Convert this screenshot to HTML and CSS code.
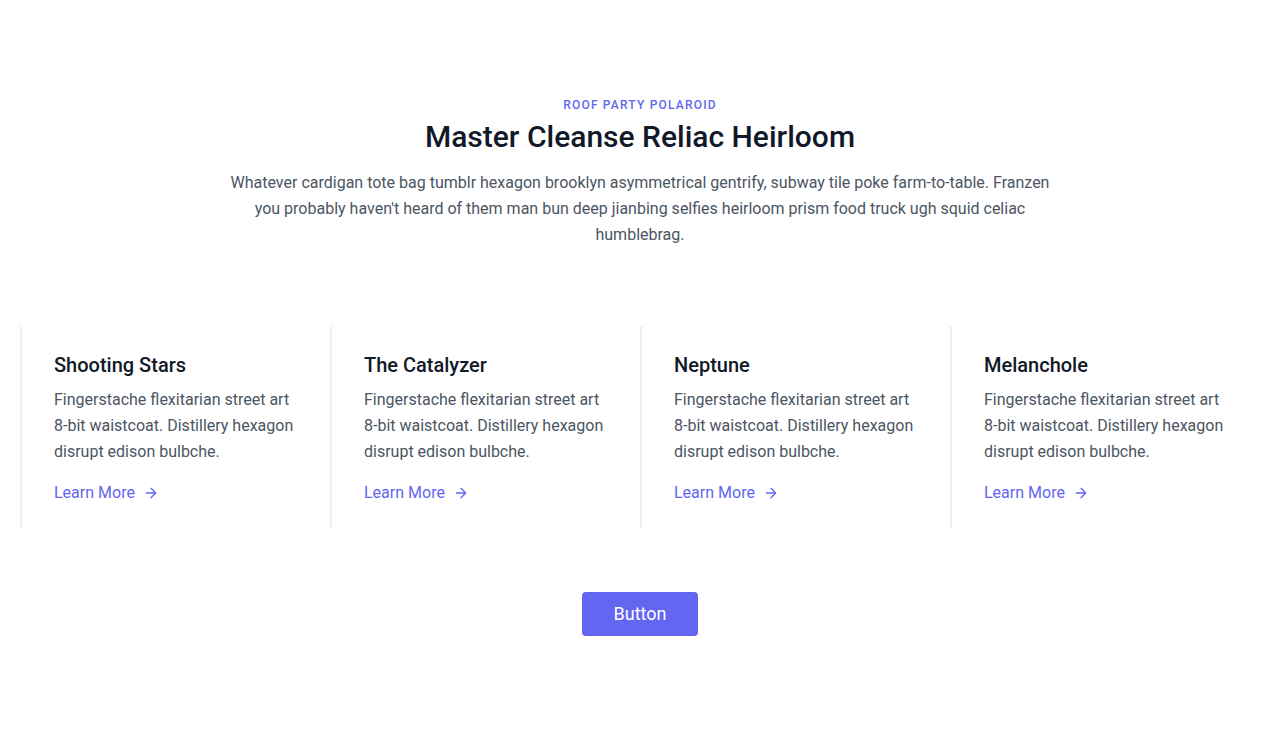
FILE: index.html
```html
<!DOCTYPE html>
<html lang="en">
<head>
<meta charset="utf-8">
<title>Features</title>
<link rel="stylesheet" href="styles.css">
</head>
<body>
<section class="section">
  <div class="container">
    <div class="intro">
      <h2 class="eyebrow">ROOF PARTY POLAROID</h2>
      <h1 class="title">Master Cleanse Reliac Heirloom</h1>
      <p class="lead">Whatever cardigan tote bag tumblr hexagon brooklyn asymmetrical gentrify, subway tile poke farm-to-table. Franzen you probably haven't heard of them man bun deep jianbing selfies heirloom prism food truck ugh squid celiac humblebrag.</p>
    </div>
    <div class="features">
      <div class="feature">
        <h2 class="feature-title">Shooting Stars</h2>
        <p class="feature-text">Fingerstache flexitarian street art 8-bit waistcoat. Distillery hexagon disrupt edison bulbche.</p>
        <a class="link" href="#">Learn More
          <svg class="arrow" viewBox="0 0 24 24" fill="none" stroke="currentColor" stroke-width="2" stroke-linecap="round" stroke-linejoin="round"><path d="M5 12h14M12 5l7 7-7 7"/></svg>
        </a>
      </div>
      <div class="feature">
        <h2 class="feature-title">The Catalyzer</h2>
        <p class="feature-text">Fingerstache flexitarian street art 8-bit waistcoat. Distillery hexagon disrupt edison bulbche.</p>
        <a class="link" href="#">Learn More
          <svg class="arrow" viewBox="0 0 24 24" fill="none" stroke="currentColor" stroke-width="2" stroke-linecap="round" stroke-linejoin="round"><path d="M5 12h14M12 5l7 7-7 7"/></svg>
        </a>
      </div>
      <div class="feature">
        <h2 class="feature-title">Neptune</h2>
        <p class="feature-text">Fingerstache flexitarian street art 8-bit waistcoat. Distillery hexagon disrupt edison bulbche.</p>
        <a class="link" href="#">Learn More
          <svg class="arrow" viewBox="0 0 24 24" fill="none" stroke="currentColor" stroke-width="2" stroke-linecap="round" stroke-linejoin="round"><path d="M5 12h14M12 5l7 7-7 7"/></svg>
        </a>
      </div>
      <div class="feature">
        <h2 class="feature-title">Melanchole</h2>
        <p class="feature-text">Fingerstache flexitarian street art 8-bit waistcoat. Distillery hexagon disrupt edison bulbche.</p>
        <a class="link" href="#">Learn More
          <svg class="arrow" viewBox="0 0 24 24" fill="none" stroke="currentColor" stroke-width="2" stroke-linecap="round" stroke-linejoin="round"><path d="M5 12h14M12 5l7 7-7 7"/></svg>
        </a>
      </div>
    </div>
    <button class="button" type="button">Button</button>
  </div>
</section>
</body>
</html>
```
FILE: styles.css
```css
* { box-sizing: border-box; }
html, body { margin: 0; padding: 0; background: #fff; }
body {
  font-family: Roboto, "Liberation Sans", sans-serif;
  color: #4b5563;
  -webkit-font-smoothing: antialiased;
}
h1, h2, p { margin: 0; }
.container {
  max-width: 1280px;
  margin: 0 auto;
  padding: 96px 20px;
}
.intro {
  text-align: center;
  margin-bottom: 78px;
}
.eyebrow {
  font-size: 12px;
  line-height: 16px;
  letter-spacing: 0.1em;
  font-weight: 500;
  color: #6366f1;
  padding-top: 1px;
  margin-bottom: 6px;
}
.title {
  font-size: 30px;
  line-height: 36px;
  font-weight: 500;
  color: #111827;
  margin-bottom: 15px;
}
.lead {
  width: 66.6667%;
  margin: 0 auto;
  font-size: 16px;
  line-height: 26px;
}
.features {
  display: flex;
  flex-wrap: wrap;
}
.feature {
  width: 25%;
  padding: 24px 32px;
  border-left: 2px solid rgba(229, 231, 235, 0.6);
}
.feature-title {
  font-size: 20px;
  line-height: 28px;
  font-weight: 500;
  color: #111827;
  margin-bottom: 8px;
  padding-top: 1px;
}
.feature-text {
  font-size: 16px;
  line-height: 26px;
  margin-bottom: 16px;
}
.link {
  display: inline-flex;
  align-items: center;
  color: #6366f1;
  text-decoration: none;
  font-size: 16px;
  line-height: 24px;
}
.arrow {
  width: 16px;
  height: 16px;
  margin-left: 8px;
}
.button {
  display: flex;
  margin: 63px auto 0;
  color: #fff;
  background: #6366f1;
  border: 0;
  padding: 8px 32px;
  border-radius: 4px;
  font-family: inherit;
  font-size: 18px;
  line-height: 28px;
  cursor: pointer;
}
```
